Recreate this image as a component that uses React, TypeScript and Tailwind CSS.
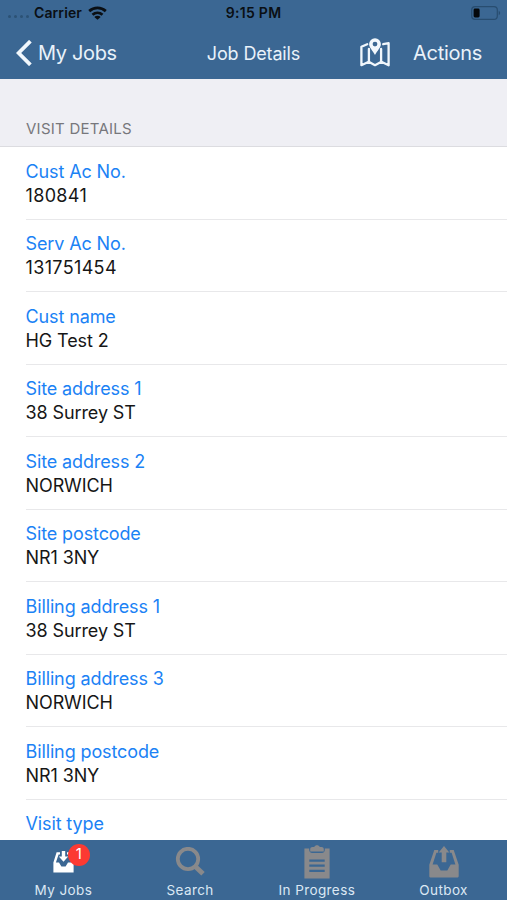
const rows = [
  { label: "Cust Ac No.", value: "180841" },
  { label: "Serv Ac No.", value: "131751454" },
  { label: "Cust name", value: "HG Test 2" },
  { label: "Site address 1", value: "38 Surrey ST" },
  { label: "Site address 2", value: "NORWICH" },
  { label: "Site postcode", value: "NR1 3NY" },
  { label: "Billing address 1", value: "38 Surrey ST" },
  { label: "Billing address 3", value: "NORWICH" },
  { label: "Billing postcode", value: "NR1 3NY" },
  { label: "Visit type", value: "" },
]

function WifiIcon() {
  return (
    <svg width="19" height="14" viewBox="0 0 19 14" fill="none" stroke="#0a0f14" strokeWidth="2.8">
      <path d="M1.2 5.1C5.8 .9 13.2 .9 17.8 5.1" />
      <path d="M4.5 8.7C7.4 6.2 11.6 6.2 14.5 8.7" />
      <path d="M9.5 13.8 6.3 10.9C8.2 9.3 10.8 9.3 12.7 10.9Z" fill="#0a0f14" stroke="none" />
    </svg>
  )
}

function BatteryIcon() {
  return (
    <svg width="30" height="14" viewBox="0 0 30 14">
      <rect x=".7" y=".7" width="25.6" height="12.6" rx="3.4" fill="none" stroke="#284d70" strokeWidth="1.2" />
      <rect x="2.6" y="2.6" width="6" height="8.8" rx="1.4" fill="#05080b" />
      <path d="M27.7 4.8c2 .8 2 3.6 0 4.4Z" fill="#284d70" />
    </svg>
  )
}

function MapIcon() {
  return (
    <svg width="30" height="29" viewBox="0 0 30 29" fill="none" stroke="#f1f7fc" strokeWidth="2.3" strokeLinejoin="round" strokeLinecap="round">
      <path d="M7.2 6.2 1.4 8.7V27.2L8.7 23.8 15 27.2 21.4 23.8 28.6 27.2V5.2L23.2 6.2" />
      <path d="M8.9 11V23.5M21.1 11V23.5" />
      <path
        d="M15 .2a5.9 5.9 0 0 0-5.9 5.9c0 3.8 3.8 6.8 5.9 11 2.1-4.2 5.9-7.2 5.9-11A5.9 5.9 0 0 0 15 .2Zm0 3.5a2.4 2.4 0 1 1 0 4.8 2.4 2.4 0 0 1 0-4.8Z"
        fill="#f1f7fc"
        fillRule="evenodd"
        stroke="none"
      />
    </svg>
  )
}

function InboxIcon() {
  return (
    <svg width="21" height="22" viewBox="0 0 21 22" fill="#fff">
      <path d="M3.6 1.2H7v2.2H5.6L2.9 11.4H6l2.4 4h4.2l2.4-4h3.3L15.4 3.4H14V1.2h3.2L20.6 11.4V21.4H.4V11.4Z" />
      <path d="M8.8 0h3.4v5.5h3L10.5 10.8 5.8 5.5h3Z" />
    </svg>
  )
}

function SearchIcon() {
  return (
    <svg width="30" height="30" viewBox="0 0 30 30" fill="none" stroke="#89898b">
      <circle cx="13" cy="12" r="10.2" strokeWidth="3.8" />
      <path d="m20 19.2 8 7.6" strokeWidth="4.9" />
    </svg>
  )
}

function ClipboardIcon() {
  return (
    <svg width="26" height="34" viewBox="0 0 26 34" fill="#89898b">
      <path d="M.4 3.5h4.8v1.2c0 2 1 3.2 3 3.2h9.6c2 0 3-1.2 3-3.2V3.5h4.8V33.4H.4Z" />
      <path d="M6.2 6.6V4.2c0-1.4.9-2.2 2.3-2.2h1.7C10.8.8 11.7.3 13 .3s2.2.5 2.8 1.7h1.7c1.4 0 2.3.8 2.3 2.2v2.4Z" />
      <path d="M5.3 15.7h15.4M5.3 20.7h15.4M5.3 25.8h15.4" stroke="#3b6793" strokeWidth="2.2" />
    </svg>
  )
}

function OutboxIcon() {
  return (
    <svg width="30" height="32" viewBox="0 0 30 32" fill="#89898b">
      <path d="M5.3 4h3.9v2.8H7.4L3.6 18.5h4.7L11.7 24.6h6.6l3.4-6.1h4.7L22.6 6.8h-1.8V4h3.9L29.7 18.7V30c0 1-.6 1.6-1.6 1.6H1.9C.9 31.6.3 31 .3 30V18.7Z" />
      <path d="M15 0 20.3 6.5h-3v9.7h-4.6V6.5h-3Z" />
    </svg>
  )
}

const tabs = [
  { title: "My Jobs", icon: InboxIcon, badge: 1, pad: "pt-[11px]" },
  { title: "Search", icon: SearchIcon, pad: "pt-[7px]" },
  { title: "In Progress", icon: ClipboardIcon, pad: "pt-[5px]" },
  { title: "Outbox", icon: OutboxIcon, pad: "pt-[6px]" },
]

export default function App() {
  return (
    <div className="flex h-[900px] w-[507px] flex-col overflow-hidden bg-white font-['Inter','Liberation_Sans',sans-serif]">
      <header className="h-[79px] shrink-0 bg-[#3b6793]">
        <div className="grid h-[26px] grid-cols-[1fr_auto_1fr] items-center text-[14px] font-semibold text-[#0a0f14]">
          <div className="flex items-center pl-2">
            <div className="flex gap-[3px] pt-[7px]">
              {[0, 1, 2, 3].map((dot) => (
                <span key={dot} className="size-[3px] rounded-full bg-[#2c5275]" />
              ))}
            </div>
            <span className="mr-[6px] ml-[5px] pb-px tracking-[0.1px]">Carrier</span>
            <WifiIcon />
          </div>
          <span className="pb-px tracking-[0.3px]">9:15 PM</span>
          <div className="flex justify-end pr-[6px]">
            <BatteryIcon />
          </div>
        </div>

        <div className="grid h-[53px] grid-cols-[1fr_auto_1fr] items-center text-[#e9f2fa]">
          <button className="flex items-center gap-[6px] pl-4 text-[20px] tracking-[-0.35px]">
            <svg width="16" height="26" viewBox="0 0 16 26" fill="none" stroke="#f1f7fc" strokeWidth="3.8">
              <path d="M14.4 1.2 2.6 13l11.8 11.8" />
            </svg>
            My Jobs
          </button>
          <h1 className="pt-px text-[18px] tracking-[-0.15px]">Job Details</h1>
          <div className="flex items-center justify-end gap-[23px] pr-[25px] text-[20px] tracking-[-0.3px]">
            <MapIcon />
            <button>Actions</button>
          </div>
        </div>
      </header>

      <main className="min-h-0 flex-1 overflow-hidden">
        <h2 className="flex h-[68px] items-end border-b border-[#dcdce0] bg-[#efeff4] pb-[7px] pl-[26px] text-[15px] leading-5 tracking-[0.25px] text-[#77777c]">
          VISIT DETAILS
        </h2>
        <dl className="pl-[25.5px] text-[18px] leading-6">
          {rows.map((row) => (
            <div key={row.label} className="h-[72.55px] border-b border-[#e8e8ea] pt-[12.5px]">
              <dt className="tracking-[-0.12px] text-[#1b82f5]">{row.label}</dt>
              <dd className={`text-[#161616] ${/^\d+$/.test(row.value) ? "tracking-[0.35px]" : "tracking-[-0.1px]"}`}>
                {row.value}
              </dd>
            </div>
          ))}
        </dl>
      </main>

      <nav className="grid h-[60px] shrink-0 grid-cols-4 bg-[#3b6793] text-[13.5px] text-[#dbe8f4]">
        {tabs.map((tab) => (
          <button key={tab.title} className="flex flex-col items-center">
            <span className={`relative flex h-10 justify-center ${tab.pad}`}>
              <tab.icon />
              {tab.badge && (
                <span className="absolute top-[4px] left-[15px] flex size-[22px] items-center justify-center rounded-full bg-[#fc3a32] pb-px text-[15px] text-white">
                  {tab.badge}
                </span>
              )}
            </span>
            <span className="tracking-[0.4px]">{tab.title}</span>
          </button>
        ))}
      </nav>
    </div>
  )
}
